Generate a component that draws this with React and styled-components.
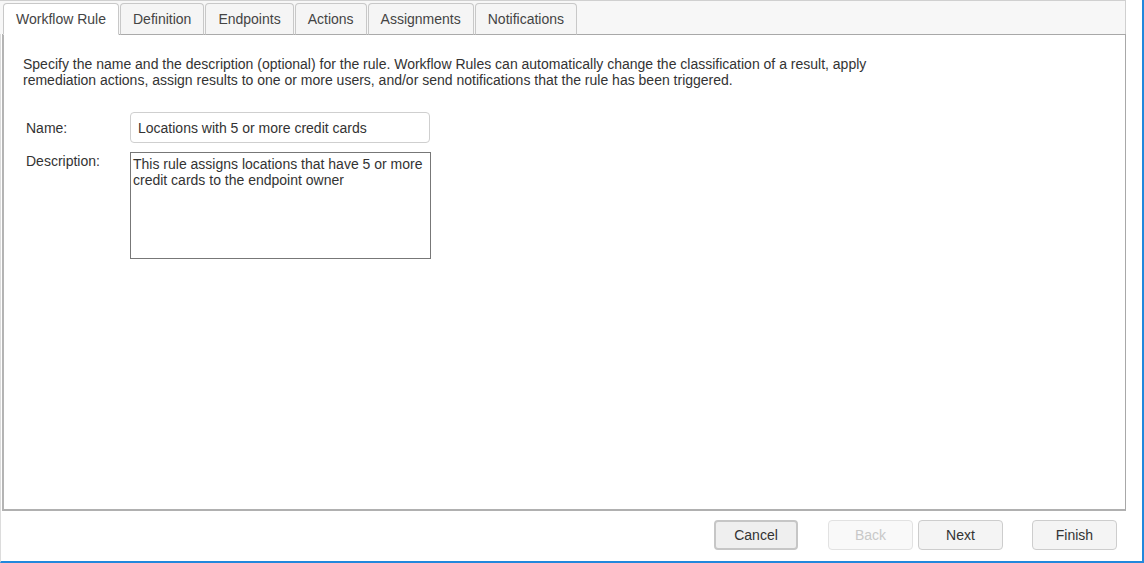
import React from "react";
import styled, { createGlobalStyle } from "styled-components";

const Global = createGlobalStyle`
  html, body { margin: 0; padding: 0; background: #fff; }
  body { font-family: "Liberation Sans", Arial, sans-serif; color: #333; }
  * { box-sizing: border-box; }
`;

const Frame = styled.div`
  width: 1144px;
  height: 563px;
  border-left: 1px solid #dcdcdc;
  border-right: 2px solid #2188dc;
  border-bottom: 2px solid #2188dc;
  display: flex;
  flex-direction: column;
  padding-right: 16px;
`;

const Dialog = styled.div`
  flex: 1;
  display: flex;
  flex-direction: column;
  padding-left: 1px;
`;

const TabStrip = styled.div`
  height: 34px;
  background: #f7f7f7;
  border-top: 1px solid #d0d0d0;
  border-right: 1px solid #d0d0d0;
  margin-left: -2px;
  padding: 1px 0 0 3px;
  display: flex;
  align-items: flex-end;
  gap: 1px;
  position: relative;
  z-index: 1;
`;

const Tab = styled.div`
  height: 32px;
  padding: 0 12px 1px;
  display: flex;
  align-items: center;
  font-size: 14px;
  color: #444;
  background: ${(p) => (p.$active ? "#fff" : "#f5f5f5")};
  border: 1px solid #c8c8c8;
  border-bottom: ${(p) => (p.$active ? "1px solid #fff" : "1px solid #aaa")};
  border-radius: 4px 4px 0 0;
  margin-bottom: -1px;
  white-space: nowrap;
`;

const Panel = styled.div`
  flex: 1;
  border: 1px solid #a8a8a8;
  border-left: 2px solid #b4b4b4;
  border-bottom: 2px solid #b0b0b0;
  background: #fff;
  padding: 21px 0 0 19px;
`;

const Intro = styled.p`
  margin: 0;
  width: 865px;
  font-size: 14px;
  line-height: 16px;
  color: #333;
`;

const Form = styled.div`
  margin-top: 24px;
  padding-left: 3px;
  display: grid;
  grid-template-columns: 104px auto;
  row-gap: 9px;
  align-items: start;
`;

const Label = styled.label`
  font-size: 14px;
  color: #333;
  line-height: 16px;
  padding-top: ${(p) => p.$top}px;
`;

const TextInput = styled.div`
  width: 300px;
  height: 31px;
  border: 1px solid #cfcfcf;
  border-radius: 4px;
  padding: 0 7px;
  display: flex;
  align-items: center;
  font-size: 14px;
  color: #333;
`;

const TextArea = styled.div`
  width: 301px;
  height: 107px;
  border: 1px solid #777;
  padding: 3px 2px;
  font-size: 14px;
  line-height: 16px;
  color: #333;
`;

const Footer = styled.div`
  height: 50px;
  display: flex;
  align-items: flex-start;
  justify-content: flex-end;
  padding: 9px 25px 0 0;
  margin-right: -16px;
`;

const Button = styled.button`
  width: ${(p) => p.$w || 85}px;
  height: 30px;
  margin-left: ${(p) => p.$gap || 0}px;
  font-family: "Liberation Sans", Arial, sans-serif;
  font-size: 14px;
  color: ${(p) => (p.disabled ? "#c8c8c8" : "#333")};
  background: ${(p) => (p.$focus ? "#efefef" : p.disabled ? "#f9f9f9" : "#f4f4f4")};
  border: ${(p) =>
    p.$focus ? "2px solid #c6c6c6" : p.disabled ? "1px solid #e2e2e2" : "1px solid #cdcdcd"};
  border-radius: 4px;
  padding: 0;
  cursor: default;
`;

const tabs = ["Workflow Rule", "Definition", "Endpoints", "Actions", "Assignments", "Notifications"];

export default function App() {
  return (
    <>
      <Global />
      <Frame>
        <Dialog>
          <TabStrip>
            {tabs.map((t, i) => (
              <Tab key={t} $active={i === 0}>
                {t}
              </Tab>
            ))}
          </TabStrip>
          <Panel>
            <Intro>
              Specify the name and the description (optional) for the rule. Workflow Rules can
              automatically change the classification of a result, apply remediation actions,
              assign results to one or more users, and/or send notifications that the rule has
              been triggered.
            </Intro>
            <Form>
              <Label $top={8}>Name:</Label>
              <TextInput>Locations with 5 or more credit cards</TextInput>
              <Label $top={1}>Description:</Label>
              <TextArea>
                This rule assigns locations that have 5 or more credit cards to the endpoint owner
              </TextArea>
            </Form>
          </Panel>
        </Dialog>
        <Footer>
          <Button $w={84} $focus>Cancel</Button>
          <Button $w={85} $gap={30} disabled>Back</Button>
          <Button $w={85} $gap={5}>Next</Button>
          <Button $w={85} $gap={29}>Finish</Button>
        </Footer>
      </Frame>
    </>
  );
}
